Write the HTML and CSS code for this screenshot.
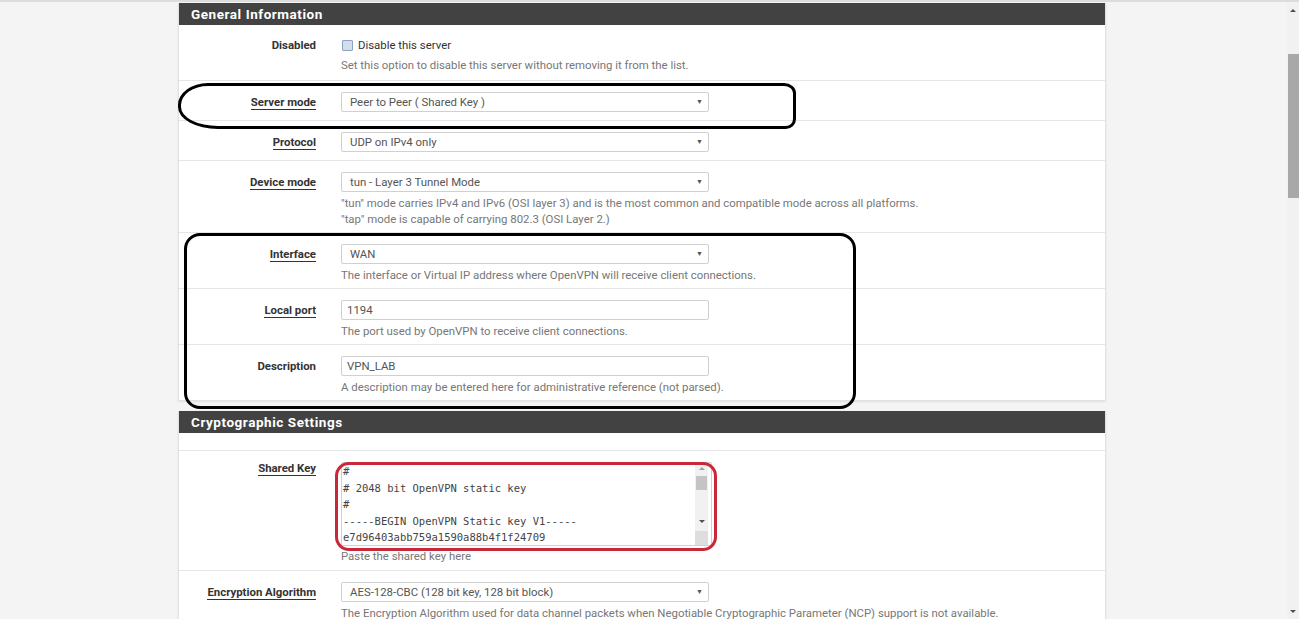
FILE: index.html
```html
<!DOCTYPE html>
<html lang="en">
<head>
    <meta charset="UTF-8">
    <title>OpenVPN: Server - Edit</title>
    <link rel="stylesheet" href="styles.css">
</head>
<body>

<div class="screen">
    <main class="page">

        <!-- General Information -->
        <section class="panel">
            <h2 class="panel-title">General Information</h2>

            <div class="form-row">
                <div class="row-label check-label">Disabled</div>
                <div class="row-field">
                    <label class="check"><span class="check-box"></span>Disable this server</label>
                    <p class="help">Set this option to disable this server without removing it from the list.</p>
                </div>
            </div>

            <div class="form-row">
                <div class="row-label"><span class="req">Server mode</span></div>
                <div class="row-field">
                    <div class="select">Peer to Peer ( Shared Key )<span class="caret">&#9660;</span></div>
                </div>
            </div>

            <div class="form-row">
                <div class="row-label"><span class="req">Protocol</span></div>
                <div class="row-field">
                    <div class="select">UDP on IPv4 only<span class="caret">&#9660;</span></div>
                </div>
            </div>

            <div class="form-row">
                <div class="row-label"><span class="req">Device mode</span></div>
                <div class="row-field">
                    <div class="select">tun - Layer 3 Tunnel Mode<span class="caret">&#9660;</span></div>
                    <p class="help">"tun" mode carries IPv4 and IPv6 (OSI layer 3) and is the most common and compatible mode across all platforms.<br>"tap" mode is capable of carrying 802.3 (OSI Layer 2.)</p>
                </div>
            </div>

            <div class="form-row">
                <div class="row-label"><span class="req">Interface</span></div>
                <div class="row-field">
                    <div class="select">WAN<span class="caret">&#9660;</span></div>
                    <p class="help">The interface or Virtual IP address where OpenVPN will receive client connections.</p>
                </div>
            </div>

            <div class="form-row">
                <div class="row-label"><span class="req">Local port</span></div>
                <div class="row-field">
                    <div class="input">1194</div>
                    <p class="help">The port used by OpenVPN to receive client connections.</p>
                </div>
            </div>

            <div class="form-row">
                <div class="row-label">Description</div>
                <div class="row-field">
                    <div class="input">VPN_LAB</div>
                    <p class="help">A description may be entered here for administrative reference (not parsed).</p>
                </div>
            </div>
        </section>

        <!-- Cryptographic Settings -->
        <section class="panel">
            <h2 class="panel-title">Cryptographic Settings</h2>
            <div class="form-row empty-row"></div>

            <div class="form-row">
                <div class="row-label key-label"><span class="req">Shared Key</span></div>
                <div class="row-field">
                    <div class="key-area">
                        <pre class="key-text">#
# 2048 bit OpenVPN static key
#
-----BEGIN OpenVPN Static key V1-----
e7d96403abb759a1590a88b4f1f24709</pre>
                        <div class="key-scroll">
                            <span class="arrow-up"></span>
                            <span class="key-thumb"></span>
                            <span class="arrow-down"></span>
                            <span class="grip"></span>
                        </div>
                    </div>
                    <p class="help">Paste the shared key here</p>
                </div>
            </div>

            <div class="form-row">
                <div class="row-label"><span class="req">Encryption Algorithm</span></div>
                <div class="row-field">
                    <div class="select">AES-128-CBC (128 bit key, 128 bit block)<span class="caret">&#9660;</span></div>
                    <p class="help">The Encryption Algorithm used for data channel packets when Negotiable Cryptographic Parameter (NCP) support is not available.</p>
                </div>
            </div>
        </section>

        <!-- hand drawn marks -->
        <div class="mark mark-mode"></div>
        <div class="mark mark-iface"></div>
        <div class="mark mark-key"></div>
    </main>

    <div class="scrollbar">
        <span class="arrow-up"></span>
        <span class="thumb"></span>
        <span class="arrow-down"></span>
    </div>
</div>

</body>
</html>
```

FILE: styles.css
```css
html, body {
    margin: 0;
    padding: 0;
    height: 100%;
    overflow: hidden;
}

body {
    background-color: #f4f4f4;
    color: #333333;
    font-family: Roboto, 'Liberation Sans', sans-serif;
    font-size: 11.4px;
}

.screen {
    display: flex;
    height: 619px;
    border-top: 2px solid #dcdcdc;
    box-sizing: border-box;
}

.page {
    position: relative;
    flex: 1;
    padding: 1px 0 0 178px;
}

/* Panels */
.panel {
    width: 928px;
    background-color: #ffffff;
    border: 1px solid #e2e2e2;
    border-top: none;
    box-sizing: border-box;
    margin-bottom: 10px;
    box-shadow: 0 1px 2px rgba(0, 0, 0, 0.08);
}

.panel-title {
    margin: 0;
    height: 22px;
    line-height: 23px;
    padding-left: 12px;
    background-color: #424242;
    color: #ffffff;
    font-size: 13.5px;
    font-weight: bold;
    letter-spacing: 0.55px;
}

.form-row {
    display: grid;
    grid-template-columns: 137px 1fr;
    column-gap: 25px;
    padding: 11px 0 8px;
    border-top: 1px solid #e6e6e6;
}

.panel-title + .form-row {
    border-top: none;
}

.empty-row {
    padding: 0;
    height: 17px;
}

.row-label {
    text-align: right;
    font-weight: bold;
    line-height: 20px;
    color: #333333;
}

.check-label {
    margin-top: -1px;
}

.key-label {
    margin-top: -4px;
}

.req {
    border-bottom: 1px solid #333333;
}

.row-field {
    min-width: 0;
}

/* Controls */
.select,
.input {
    position: relative;
    width: 368px;
    height: 20px;
    line-height: 18px;
    box-sizing: border-box;
    border: 1px solid #d0d0d0;
    border-radius: 2px;
    background-color: #ffffff;
    color: #555555;
    padding-left: 8px;
}

.input {
    padding-left: 5px;
}

.caret {
    position: absolute;
    right: 5px;
    top: 0;
    font-size: 7px;
    color: #555555;
}

.check {
    display: flex;
    align-items: center;
    gap: 5px;
    height: 20px;
    margin-top: -1px;
    padding-left: 1px;
}

.check-box {
    width: 9px;
    height: 9px;
    border: 1px solid #8da3c6;
    background-color: #d5dde9;
    border-radius: 1px;
}

.help {
    margin: 3px 0 -3px;
    line-height: 16px;
    color: #777777;
    white-space: nowrap;
}

.check + .help {
    margin: 2px 0 -1px;
}

/* Shared key textarea */
.key-area {
    position: relative;
    width: 371px;
    height: 84px;
    box-sizing: border-box;
    border: 1px solid #d0d0d0;
    border-radius: 2px;
    background-color: #ffffff;
    overflow: hidden;
}

.key-area + .help {
    margin: 2px 0 -2px;
}

.key-text {
    margin: 0;
    padding: 0 0 0 1px;
    font-family: 'DejaVu Sans Mono', 'Liberation Mono', monospace;
    font-size: 10.5px;
    line-height: 16.5px;
    color: #444444;
}

.key-scroll {
    position: absolute;
    top: 0;
    right: 3px;
    width: 13px;
    height: 100%;
    background-color: #f1f1f1;
}

.key-scroll .arrow-up {
    position: absolute;
    top: 4px;
    left: 4px;
    border: 3px solid transparent;
    border-bottom: 3px solid #a0a0a0;
    border-top: none;
}

.key-thumb {
    position: absolute;
    top: 13px;
    left: 1px;
    width: 11px;
    height: 14px;
    background-color: #c4c4c4;
}

.key-scroll .arrow-down {
    position: absolute;
    top: 57px;
    left: 4px;
    border: 3px solid transparent;
    border-top: 3px solid #505050;
    border-bottom: none;
}

.grip {
    position: absolute;
    bottom: 0;
    left: 0;
    width: 13px;
    height: 14px;
    background-color: #dedede;
}

/* Marker outlines drawn over the form */
.mark {
    position: absolute;
    box-sizing: border-box;
    border: 3px solid #000000;
    pointer-events: none;
}

.mark-mode {
    left: 178px;
    top: 81px;
    width: 618px;
    height: 46px;
    border-radius: 30px 12px 10px 40px / 22px 10px 10px 22px;
}

.mark-iface {
    left: 184px;
    top: 231px;
    width: 672px;
    height: 176px;
    border-radius: 16px;
}

.mark-key {
    left: 335px;
    top: 460px;
    width: 382px;
    height: 89px;
    border-color: #c9283a;
    border-radius: 14px;
}

/* Window scrollbar */
.scrollbar {
    position: relative;
    width: 12px;
    background-color: #f1f1f1;
}

.scrollbar .arrow-up {
    position: absolute;
    top: 7px;
    left: 3px;
    border: 3px solid transparent;
    border-bottom: 3px solid #505050;
    border-top: none;
}

.thumb {
    position: absolute;
    top: 52px;
    left: 1px;
    width: 11px;
    height: 144px;
    background-color: #a8a8a8;
}

.scrollbar .arrow-down {
    position: absolute;
    bottom: 6px;
    left: 3px;
    border: 3px solid transparent;
    border-top: 3px solid #505050;
    border-bottom: none;
}
```
